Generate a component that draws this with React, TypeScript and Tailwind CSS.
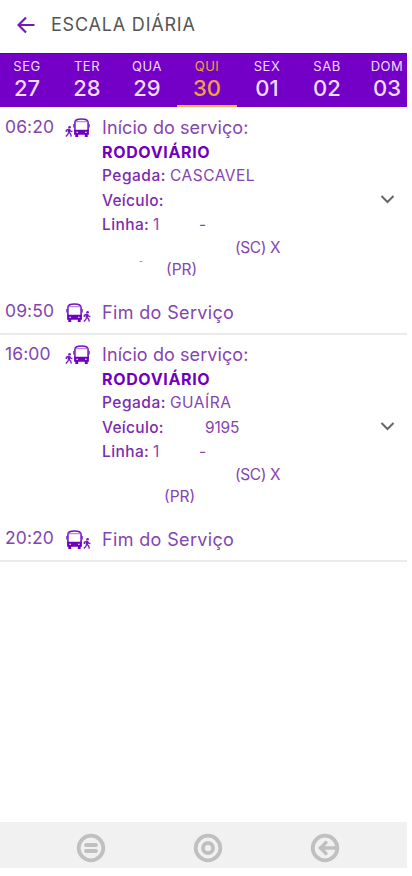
import clsx from 'clsx';

type Trip = {
  start: string;
  end: string;
  pickup: string;
  vehicle?: string;
  line: string;
};

const days = [
  { label: 'SEG', day: '27' },
  { label: 'TER', day: '28' },
  { label: 'QUA', day: '29' },
  { label: 'QUI', day: '30', active: true },
  { label: 'SEX', day: '01' },
  { label: 'SAB', day: '02' },
  { label: 'DOM', day: '03' },
];

const trips: Trip[] = [
  { start: '06:20', end: '09:50', pickup: 'CASCAVEL', line: '1' },
  { start: '16:00', end: '20:20', pickup: 'GUAÍRA', vehicle: '9195', line: '1' },
];

function Bus() {
  return (
    <svg width="17" height="19" viewBox="0 0 17 19" fill="none" className="shrink-0">
      <path
        d="M1.900 13V4.500C1.900 2 4 1 8.500 1s6.600 1 6.600 3.500V13"
        stroke="#7417bd"
        strokeWidth="1.600"
      />
      <path d="M2.500 3.700h12" stroke="#a871d4" strokeWidth="1" />
      <path d="M0.600 6v3.500M16.400 6v3.500" stroke="#8a3cc9" strokeWidth="1" />
      <path
        fillRule="evenodd"
        d="M1.100 11.800h14.800v5h-1.200V19h-2.900v-2.200H5.200V19H2.300v-2.200H1.100ZM3.300 13.800v1h1.700v-1ZM12 13.800v1h1.700v-1Z"
        fill="#6f00c0"
      />
    </svg>
  );
}

function Walker() {
  return (
    <svg width="8" height="11" viewBox="0 0 8 11" fill="none" className="shrink-0">
      <circle cx="4.600" cy="1.300" r="1.300" fill="#7417bd" />
      <path d="M4.200 3 3.700 6.500" stroke="#7417bd" strokeWidth="2.400" />
      <path
        d="M4 3.200 1.300 4.300V6M4.700 3.800l1 1.300 1.700.4M3.700 6.200 2.800 8.500.8 10.500M4 6.200l1.700 1.800.6 2.700"
        stroke="#7417bd"
        strokeWidth="1.300"
      />
    </svg>
  );
}

function TripCard({ trip, first }: { trip: Trip; first?: boolean }) {
  return (
    <section
      className={clsx(
        'border-b-2 border-[#ebebeb] text-[#8544b0]',
        first ? 'h-[228px] pt-[9px]' : 'h-[227px] pt-2',
      )}
    >
      <div className="flex">
        <time className="w-[65px] shrink-0 pl-[5px] text-[17.5px] leading-[21px] tracking-[0.1px]">
          {trip.start}
        </time>
        <div className="flex h-[21px] w-[37px] shrink-0 items-end">
          <Walker />
          <Bus />
        </div>
        <div className="w-[270px] shrink-0 text-[15.500px]">
          <p className="h-6 text-[18px] leading-6 tracking-[0.080px]">Início do serviço:</p>
          <p className="h-6 text-[16px] leading-6 font-bold tracking-[0.650px] text-[#7000bd]">RODOVIÁRIO</p>
          <p className="flex h-6 leading-6">
            <span className="w-[68px] font-medium tracking-[0.500px] text-[#7c2cae]">Pegada:</span>
            <span className="tracking-[0.500px]">{trip.pickup}</span>
          </p>
          <p className="flex h-6 leading-[25px]">
            <span className="w-[103px] font-medium tracking-[0.300px] text-[#7c2cae]">Veículo:</span>
            <span className="tracking-[-0.200px]">{trip.vehicle}</span>
          </p>
          <p className="flex h-[25px] leading-[25px]">
            <span className="w-[51px] font-medium tracking-[0.400px] text-[#7c2cae]">Linha:</span>
            <span className="w-[46px]">{trip.line}</span>
            <span>-</span>
          </p>
          <p className="h-[22px] pl-[133px] leading-[22px] tracking-[-0.400px]">(SC) X</p>
          <p className="flex h-[22px] leading-[22px]">
            <span className={clsx('pl-[37px] text-[8px] leading-[4px]', first ? 'w-16' : 'w-[62px]')}>
              {first ? '-' : ''}
            </span>
            <span>(PR)</span>
          </p>
        </div>
        <div className="flex h-[166px] flex-1 items-center">
          <svg width="15" height="10" viewBox="0 0 15 10" fill="none" className="ml-2">
            <path d="m1.500 2 6 6 6-6" stroke="#666" strokeWidth="2" />
          </svg>
        </div>
      </div>
      <div className="flex pt-[19px]">
        <time className="w-[66px] shrink-0 pl-[5px] text-[17.500px] leading-[20px] tracking-[0.1px]">
          {trip.end}
        </time>
        <div className="flex h-[21px] w-9 items-end">
          <Bus />
          <Walker />
        </div>
        <p className="text-[18px] leading-[23px] tracking-[0.350px]">Fim do Serviço</p>
      </div>
    </section>
  );
}

function NavIcon({ children }: { children: React.ReactNode }) {
  return (
    <svg
      width="30"
      height="30"
      viewBox="0 0 30 30"
      fill="none"
      stroke="#c0c0c0"
      strokeWidth="3.800"
      strokeLinecap="round"
      strokeLinejoin="round"
    >
      <circle cx="15" cy="15" r="12.300" />
      {children}
    </svg>
  );
}

export default function App() {
  return (
    <div className="h-[876px] w-[412px] overflow-hidden bg-white font-['Inter',sans-serif]">
      <div className="flex h-[868px] w-[407px] flex-col">
        <header className="flex h-[53px] items-center pb-[4px] pl-[17px]">
          <svg width="18" height="18" viewBox="0 0 18 18" fill="none" stroke="#7417bd" strokeWidth="2.200">
            <path d="M17.500 9H1.500M9 1.500 1.500 9 9 16.500" />
          </svg>
          <h1 className="ml-[16px] text-[18px] tracking-[0.8px] text-[#555]">ESCALA DIÁRIA</h1>
        </header>
        <nav className="flex h-[54px] shrink-0 overflow-hidden border-t border-[#6500ac] bg-[#7400c8] text-[#eedcf9]">
          <div className="-ml-[3px] flex">
            {days.map(({ label, day, active }) => (
              <button
                key={label}
                className={clsx(
                  'flex h-[53px] w-[60px] shrink-0 flex-col items-center border-b-2 pt-[3px]',
                  active ? 'border-[#f5b04c] text-[#f2a03e]' : 'border-transparent',
                )}
              >
                <span className="text-[13px] leading-[18px] tracking-[0.500px]">{label}</span>
                <span className="text-[22px] leading-[26px] font-medium">{day}</span>
              </button>
            ))}
          </div>
        </nav>
        <main className="flex-1">
          {trips.map((trip, i) => (
            <TripCard key={trip.start} trip={trip} first={i === 0} />
          ))}
        </main>
        <footer className="flex h-[46px] shrink-0 items-center gap-[87px] bg-[#f1f1f1] pt-[6px] pl-[76px]">
          <NavIcon>
            <path d="M10 12h10M10 18h10" />
          </NavIcon>
          <NavIcon>
            <circle cx="15" cy="15" r="5" />
          </NavIcon>
          <NavIcon>
            <path d="M26 15H10M16 9.500 10.500 15l5.500 5.500" strokeWidth="3.300" />
          </NavIcon>
        </footer>
      </div>
    </div>
  );
}
